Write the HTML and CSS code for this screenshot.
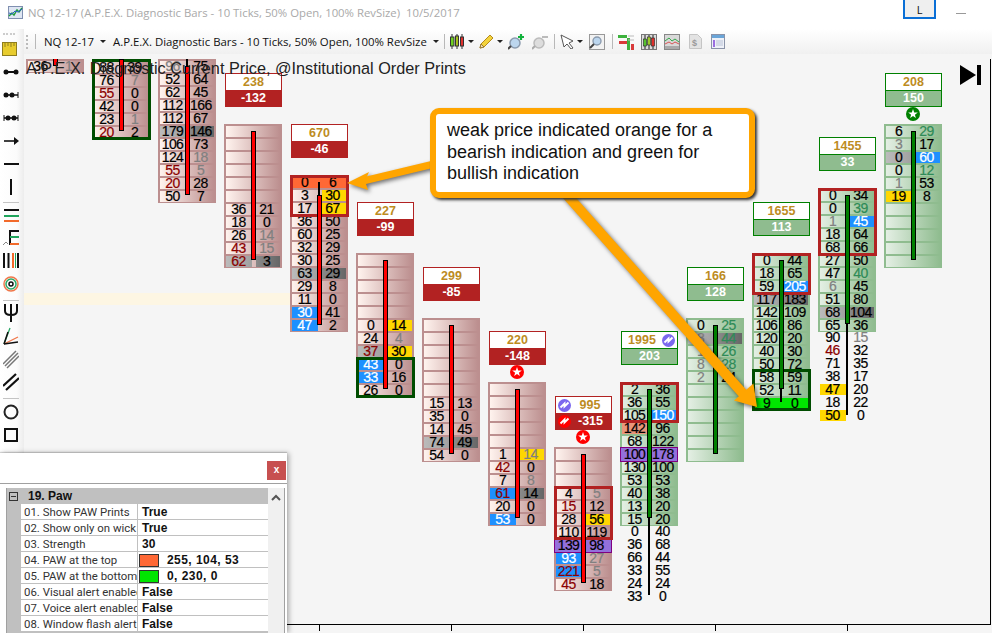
FILE: index.html
```html
<!DOCTYPE html>
<html lang="en">
<head>
<meta charset="utf-8">
<title>NQ 12-17 A.P.E.X. Diagnostic Bars</title>
<link rel="stylesheet" href="styles.css">
</head>
<body>
<div class="app">
  <header class="titlebar">
    <svg class="appicon" width="15" height="13" viewBox="0 0 15 13"><rect x=".5" y=".5" width="14" height="12" fill="#dfe6f3" stroke="#7f8fb0"/><path d="M1 10l3-3 2 2 3-5 2 2 3-4" fill="none" stroke="#1e9a3c" stroke-width="1.4"/><path d="M1 7l3 1 3-3 3 1 4-3" fill="none" stroke="#2b62c4"/></svg>
    <span class="wintitle">NQ 12-17 (A.P.E.X. Diagnostic Bars - 10 Ticks, 50% Open, 100% RevSize)&nbsp; 10/5/2017</span>
    <span class="lbtn">L</span>
    <span class="minimize"></span>
  </header>
  <div class="workspace">
    <aside class="sidebar">
      <span class="grip-h"></span>
      <svg class="ruler" width="15" height="14" viewBox="0 0 15 14"><rect x=".5" y=".5" width="14" height="13" fill="#e8cc2e" stroke="#8f7e1e"/><path d="M3 1v4M6 1v3M9 1v4M12 1v3" stroke="#8f7e1e"/></svg>
      <div class="tools">
        <svg class="tool" width="16" height="23" viewBox="0 0 16 23"><path d="M1 12h14" stroke="#111" stroke-width="2"/><circle cx="3" cy="12" r="2.5" fill="#111"/><circle cx="13" cy="12" r="2.5" fill="#111"/></svg>
        <svg class="tool" width="16" height="23" viewBox="0 0 16 23"><path d="M1 12h14" stroke="#111" stroke-width="1.5"/><circle cx="3" cy="12" r="2.5" fill="#111"/><circle cx="9" cy="12" r="2.5" fill="#111"/><path d="M15 9v6" stroke="#111"/></svg>
        <svg class="tool" width="16" height="23" viewBox="0 0 16 23"><path d="M1 12h14" stroke="#111" stroke-width="1.5"/><circle cx="5" cy="12" r="2.5" fill="#111"/><circle cx="11" cy="12" r="2.5" fill="#111"/><path d="M1 9v6M15 9v6" stroke="#111"/></svg>
        <svg class="tool" width="16" height="23" viewBox="0 0 16 23"><path d="M1 12h13" stroke="#111" stroke-width="1.6"/><path d="M11 8l5 4-5 4z" fill="#111"/></svg>
        <svg class="tool" width="16" height="23" viewBox="0 0 16 23"><path d="M1 12h15" stroke="#111" stroke-width="2"/></svg>
        <svg class="tool" width="16" height="23" viewBox="0 0 16 23"><path d="M8 4v16" stroke="#111" stroke-width="2"/></svg>
        <span class="toolsep gap-a"></span>
        <svg class="tool" width="16" height="23" viewBox="0 0 16 23"><path d="M1 7h15" stroke="#111" stroke-width="2"/><path d="M1 13h15" stroke="#1fa55c" stroke-width="2"/><path d="M1 18h15" stroke="#f26a2a" stroke-width="2"/></svg>
        <svg class="tool" width="16" height="23" viewBox="0 0 16 23"><path d="M7 4v15" stroke="#111" stroke-width="2"/><path d="M7 5h9" stroke="#111" stroke-width="2"/><path d="M7 11h9" stroke="#1fa55c" stroke-width="2"/><path d="M7 18h9" stroke="#f26a2a" stroke-width="2"/><path d="M0 19l3-3 2 2" fill="none" stroke="#888"/></svg>
        <svg class="tool" width="16" height="23" viewBox="0 0 16 23"><path d="M1 4v15M5.500 4v15" stroke="#111" stroke-width="2"/><path d="M10 4v15" stroke="#f26a2a" stroke-width="2"/><path d="M12.500 4v15" stroke="#1fa55c" stroke-width="1"/><path d="M15 4v15" stroke="#111" stroke-width="2"/></svg>
        <svg class="tool gap-c" width="16" height="23" viewBox="0 0 16 23"><circle cx="8" cy="11" r="7" fill="none" stroke="#f0774a" stroke-width="1.500"/><circle cx="8" cy="11" r="5" fill="none" stroke="#2aa866" stroke-width="1.500"/><circle cx="8" cy="11" r="2" fill="none" stroke="#111" stroke-width="1.500"/></svg>
        <span class="toolsep gap-d"></span>
        <svg class="tool" width="16" height="23" viewBox="0 0 16 23"><path d="M2 3v7q0 4 6 4 6 0 6-4V3M8 3v18" fill="none" stroke="#111" stroke-width="2"/></svg>
        <svg class="tool" width="16" height="23" viewBox="0 0 16 23"><path d="M1 20L7 4" stroke="#2aa866" stroke-width="1.300"/><path d="M1 20L15 13" stroke="#f0774a" stroke-width="1.300"/><path d="M1 20L15 18" stroke="#111" stroke-width="1.500"/><path d="M1 20L5 8" stroke="#111" stroke-width="1.500"/></svg>
        <svg class="tool" width="16" height="23" viewBox="0 0 16 23"><path d="M0 17L13 4M2 19L15 6M4 21L16 9" stroke="#777" stroke-width="1.500"/></svg>
        <svg class="tool" width="16" height="23" viewBox="0 0 16 23"><path d="M0 16L13 4M3 20L16 8" stroke="#111" stroke-width="2.200"/></svg>
        <span class="toolsep gap-e"></span>
        <svg class="tool" width="16" height="23" viewBox="0 0 16 23"><circle cx="8" cy="11" r="6.500" fill="none" stroke="#222" stroke-width="2"/></svg>
        <svg class="tool" width="16" height="23" viewBox="0 0 16 23"><rect x="2" y="5" width="12" height="12" fill="none" stroke="#111" stroke-width="2"/></svg>
      </div>
    </aside>
    <div class="mainpane">
      <nav class="toolbar">
        <span class="grip"></span>
        <span class="tsep first"></span>
        <span class="tlabel instr">NQ 12-17<i class="caret"></i></span>
        <span class="tlabel strat">A.P.E.X. Diagnostic Bars - 10 Ticks, 50% Open, 100% RevSize<i class="caret"></i></span>
        <span class="tsep s1"></span>
        <svg class="ti candle" width="14" height="15" viewBox="0 0 14 15"><path d="M2 0v15M7 0v15M12 0v15" stroke="#333"/><rect x=".5" y="3" width="3.5" height="9" fill="#6fd023" stroke="#333"/><rect x="5.5" y="2" width="3" height="10" fill="#a5c21f" stroke="#333"/><rect x="10.5" y="3" width="3" height="9" fill="#e2312d" stroke="#333"/></svg>
        <i class="caret c1t"></i>
        <svg class="ti pencil" width="15" height="15" viewBox="0 0 15 15"><path d="M1 14l1-4L11 1l3 3-9 9z" fill="#f3d33c" stroke="#b58a1b"/><path d="M1 14l1-4 3 3z" fill="#f4e3c0" stroke="#9a7b33"/></svg>
        <i class="caret c2t"></i>
        <svg class="ti zoomin" width="17" height="16" viewBox="0 0 17 16"><circle cx="7" cy="9" r="5" fill="#bcd6ee" stroke="#8b9bae" stroke-width="1.5"/><path d="M3 12l-3 3" stroke="#444" stroke-width="2"/><path d="M13 0v6M10 3h6" stroke="#12b23c" stroke-width="2.2"/></svg>
        <svg class="ti zoomout" width="16" height="16" viewBox="0 0 16 16"><circle cx="7" cy="9" r="5" fill="#ddd" stroke="#bbb" stroke-width="1.5"/><path d="M3 12l-3 3" stroke="#aaa" stroke-width="2"/><path d="M10 3h6" stroke="#bbb" stroke-width="2"/></svg>
        <span class="tsep s2"></span>
        <svg class="ti cursor" width="15" height="15" viewBox="0 0 15 15"><path d="M1 1l12 6-4 2 4 5-2 1-4-5-3 3z" fill="#fff" stroke="#555"/></svg>
        <i class="caret c3t"></i>
        <svg class="ti zoombox" width="16" height="16" viewBox="0 0 16 16"><rect x=".5" y=".5" width="15" height="15" fill="#f2f2f2" stroke="#999"/><circle cx="8" cy="7" r="4" fill="#bcd6ee" stroke="#8b9bae" stroke-width="1.4"/><path d="M5 10l-4 4" stroke="#444" stroke-width="2"/></svg>
        <span class="tsep s3"></span>
        <svg class="ti barsicon" width="16" height="16" viewBox="0 0 16 16"><rect x="0" y="1" width="9" height="3" fill="#3db23d"/><rect x="1" y="7" width="8" height="3" fill="#d83a3a"/><rect x="9" y="4" width="3" height="12" fill="#3db23d"/><rect x="13" y="10" width="3" height="6" fill="#d83a3a"/><path d="M10 2h6M10 6h6" stroke="#bbb"/></svg>
        <svg class="ti boxicon" width="16" height="16" viewBox="0 0 16 16"><rect x=".5" y=".5" width="15" height="15" fill="#ddd" stroke="#777"/><path d="M4 1v14M8 1v14M12 1v14" stroke="#222"/><rect x="2.5" y="5" width="3" height="7" fill="#55c22e" stroke="#222" stroke-width=".6"/><rect x="6.5" y="3" width="3" height="8" fill="#9ecb2c" stroke="#222" stroke-width=".6"/><rect x="10.5" y="4" width="3" height="8" fill="#df2f2b" stroke="#222" stroke-width=".6"/></svg>
        <svg class="ti lineicon" width="16" height="16" viewBox="0 0 16 16"><rect x=".5" y=".5" width="15" height="15" fill="#d9d9d9" stroke="#888"/><path d="M1 7l4-3 3 3 3-2 4 3" fill="none" stroke="#33a84a"/><path d="M1 10l4-2 3 2 3-2 4 2" fill="none" stroke="#d85555"/><rect x="1" y="12" width="14" height="3" fill="#aaa"/></svg>
        <svg class="ti docicon" width="13" height="15" viewBox="0 0 13 15"><path d="M.5.5h8l4 4v10H.5z" fill="#e3e3e3" stroke="#c5c5c5"/><text x="3" y="12" class="dollar">$</text></svg>
        <svg class="ti sheeticon" width="14" height="15" viewBox="0 0 14 15"><rect x=".5" y=".5" width="13" height="14" fill="#eef1f8" stroke="#8a93a8"/><rect x="1" y="1" width="12" height="3" fill="#6aa5d8"/><rect x="2" y="6" width="2" height="7" fill="#9a6ee0"/><path d="M5 7h7M5 9h7M5 11h7" stroke="#b9c2d6"/></svg>
      </nav>
      <main class="chart">
        <div class="plot">
          <div class="band"></div>

          <section class="col c1">
            <div class="bar red">
              <div class="row"></div>
              <div class="row"><span>36</span><span class="g">1</span></div>
              <i class="body rb ba"></i>
            </div>
          </section>

          <section class="col c2">
            <div class="bar red">
              <div class="row"><span>88</span><span>39</span></div>
              <div class="row"><span>76</span><span class="g">7</span></div>
              <div class="row"><span class="r">55</span><span>0</span></div>
              <div class="row"><span>42</span><span>0</span></div>
              <div class="row"><span>23</span><span class="g">1</span></div>
              <div class="row"><span class="r">20</span><span>2</span></div>
              <i class="frame dg fb"></i>
              <i class="body rb bb"></i>
            </div>
          </section>

          <section class="col c3">
            <div class="bar red">
              <div class="row"><span class="g">96</span><span>75</span></div>
              <div class="row"><span>52</span><span>64</span></div>
              <div class="row"><span>62</span><span>45</span></div>
              <div class="row"><span>112</span><span>166</span></div>
              <div class="row"><span>112</span><span>67</span></div>
              <div class="row"><span class="gl">179</span><span class="gr">146</span></div>
              <div class="row"><span>106</span><span>73</span></div>
              <div class="row"><span>124</span><span class="g">18</span></div>
              <div class="row"><span class="r">55</span><span class="g">5</span></div>
              <div class="row"><span class="r">20</span><span>28</span></div>
              <div class="row"><span>50</span><span>7</span></div>
              <i class="wick wt"></i>
              <i class="body rb"></i>
            </div>
          </section>

          <section class="col c4">
            <div class="hdr hr"><div class="hv">238</div><div class="hd">-132</div></div>
            <div class="bar red">
              <div class="row"></div><div class="row"></div><div class="row"></div><div class="row"></div><div class="row"></div><div class="row"></div>
              <div class="row"><span>36</span><span>21</span></div>
              <div class="row"><span>18</span><span>0</span></div>
              <div class="row"><span>26</span><span class="g">14</span></div>
              <div class="row"><span class="r">43</span><span class="g">15</span></div>
              <div class="row"><span class="gl r">62</span><span class="gr">3</span></div>
              <i class="body rb"></i>
            </div>
          </section>

          <section class="col c5">
            <div class="hdr hr"><div class="hv">670</div><div class="hd">-46</div></div>
            <div class="bar red">
              <div class="row hot"><span>0</span><span>6</span></div>
              <div class="row"><span>3</span><span class="go">30</span></div>
              <div class="row"><span>17</span><span class="go">67</span></div>
              <div class="row"><span>36</span><span>50</span></div>
              <div class="row"><span>60</span><span>25</span></div>
              <div class="row"><span>32</span><span>29</span></div>
              <div class="row"><span>30</span><span>25</span></div>
              <div class="row"><span class="gl">63</span><span class="gr">29</span></div>
              <div class="row"><span>29</span><span>8</span></div>
              <div class="row"><span>11</span><span>0</span></div>
              <div class="row"><span class="bl">30</span><span>41</span></div>
              <div class="row"><span class="bl">47</span><span>2</span></div>
              <i class="frame fr f3"></i>
              <i class="wick wt2"></i>
              <i class="body rb be"></i>
            </div>
          </section>

          <section class="col c6">
            <div class="hdr hr"><div class="hv">227</div><div class="hd">-99</div></div>
            <div class="bar red">
              <div class="row"></div><div class="row"></div><div class="row"></div><div class="row"></div><div class="row"></div>
              <div class="row"><span>0</span><span class="go">14</span></div>
              <div class="row"><span>24</span><span class="g">4</span></div>
              <div class="row"><span class="gl r">37</span><span class="go">30</span></div>
              <div class="row"><span class="bl">43</span><span>0</span></div>
              <div class="row"><span class="bl">33</span><span>16</span></div>
              <div class="row"><span>26</span><span>0</span></div>
              <i class="frame dg t104 f3s"></i>
              <i class="body rb"></i>
            </div>
          </section>

          <section class="col c7">
            <div class="hdr hr"><div class="hv">299</div><div class="hd">-85</div></div>
            <div class="bar red">
              <div class="row"></div><div class="row"></div><div class="row"></div><div class="row"></div><div class="row"></div><div class="row"></div>
              <div class="row"><span>15</span><span>13</span></div>
              <div class="row"><span>35</span><span>0</span></div>
              <div class="row"><span>14</span><span>45</span></div>
              <div class="row"><span class="gl">74</span><span class="gr">49</span></div>
              <div class="row"><span>54</span><span>0</span></div>
              <i class="body rb"></i>
            </div>
          </section>

          <section class="col c8">
            <div class="hdr hr"><div class="hv">220</div><div class="hd">-148</div></div>
            <svg class="star" width="14" height="14" viewBox="0 0 14 14"><circle cx="7" cy="7" r="7" fill="#f00"/><path class="starpath" d="M7 2l1.200 3.400 3.600.1-2.900 2.200 1 3.300L7 9l-2.900 2 1-3.300-2.900-2.200 3.600-.1z"/></svg>
            <div class="bar red">
              <div class="row"></div><div class="row"></div><div class="row"></div><div class="row"></div><div class="row"></div>
              <div class="row"><span>1</span><span class="go g">14</span></div>
              <div class="row"><span class="r">42</span><span>0</span></div>
              <div class="row"><span>7</span><span class="g">8</span></div>
              <div class="row"><span class="bl r">61</span><span class="gr">14</span></div>
              <div class="row"><span>20</span><span>0</span></div>
              <div class="row"><span class="bl">53</span><span>0</span></div>
              <i class="body rb"></i>
            </div>
          </section>

          <section class="col c9">
            <div class="hdr hr">
              <div class="hv hvi left"><svg class="bolt" width="13" height="13" viewBox="0 0 13 13"><circle cx="6.500" cy="6.500" r="6.500" fill="#7b68ee"/><path class="boltpath" d="M2.500 8.500l4-4v3l4-4"/></svg><b>995</b></div>
              <div class="hd hvi left"><svg class="bolt" width="13" height="13" viewBox="0 0 13 13"><circle cx="6.500" cy="6.500" r="6.500" fill="#f00"/><path class="boltpath" d="M2.500 8.500l4-4v3l4-4"/></svg><b>-315</b></div>
            </div>
            <svg class="star" width="14" height="14" viewBox="0 0 14 14"><circle cx="7" cy="7" r="7" fill="#f00"/><path class="starpath" d="M7 2l1.200 3.400 3.600.1-2.900 2.200 1 3.300L7 9l-2.900 2 1-3.300-2.900-2.200 3.600-.1z"/></svg>
            <div class="bar red">
              <div class="row"></div><div class="row"></div><div class="row"></div>
              <div class="row"><span>4</span><span class="g">5</span></div>
              <div class="row"><span class="r">15</span><span>12</span></div>
              <div class="row"><span>28</span><span class="go">56</span></div>
              <div class="row"><span>110</span><span>119</span></div>
              <div class="row pur"><span>139</span><span>98</span></div>
              <div class="row"><span class="bl">93</span><span class="g">27</span></div>
              <div class="row"><span class="bl r">221</span><span class="g">5</span></div>
              <div class="row"><span class="r">45</span><span>18</span></div>
              <i class="frame fr t39 f4"></i>
              <i class="body rb"></i>
            </div>
          </section>

          <section class="col c10">
            <div class="hdr hg">
              <div class="hv hvi right"><b>1995</b><svg class="bolt" width="13" height="13" viewBox="0 0 13 13"><circle cx="6.500" cy="6.500" r="6.500" fill="#7b68ee"/><path class="boltpath" d="M2.500 8.500l4-4v3l4-4"/></svg></div>
              <div class="hd">203</div>
            </div>
            <div class="bar grn">
              <div class="row"><span>2</span><span>36</span></div>
              <div class="row"><span>36</span><span>55</span></div>
              <div class="row"><span>105</span><span class="bl">150</span></div>
              <div class="row"><span class="sa">142</span><span>96</span></div>
              <div class="row"><span>68</span><span>122</span></div>
              <div class="row pur"><span>100</span><span>178</span></div>
              <div class="row"><span>130</span><span>100</span></div>
              <div class="row"><span>53</span><span>53</span></div>
              <div class="row"><span>40</span><span>38</span></div>
              <div class="row"><span>13</span><span>20</span></div>
              <div class="row"><span>15</span><span>20</span></div>
              <i class="frame fr f3s"></i>
              <i class="wick wj"></i>
              <i class="body gb"></i>
            </div>
            <div class="plain">
              <div class="row"><span>0</span><span>40</span></div>
              <div class="row"><span>36</span><span>68</span></div>
              <div class="row"><span>66</span><span>44</span></div>
              <div class="row"><span>33</span><span>55</span></div>
              <div class="row"><span>24</span><span>24</span></div>
              <div class="row"><span>33</span><span>0</span></div>
            </div>
          </section>

          <section class="col c11">
            <div class="hdr hg"><div class="hv">166</div><div class="hd">128</div></div>
            <div class="bar grn">
              <div class="row"><span>0</span><span class="sg">25</span></div>
              <div class="row"><span class="gl g">8</span><span class="gr sg">44</span></div>
              <div class="row"><span class="g">1</span><span class="sg">26</span></div>
              <div class="row"><span class="g">8</span><span class="sg">28</span></div>
              <div class="row"><span class="g">2</span><span>24</span></div>
              <div class="row"></div><div class="row"></div><div class="row"></div><div class="row"></div><div class="row"></div><div class="row"></div>
              <i class="body gb"></i>
            </div>
          </section>

          <section class="col c12">
            <div class="hdr hg"><div class="hv">1655</div><div class="hd">113</div></div>
            <div class="bar grn">
              <div class="row"><span>0</span><span>44</span></div>
              <div class="row"><span>18</span><span>65</span></div>
              <div class="row"><span>59</span><span class="bl">205</span></div>
              <div class="row"><span class="gl">117</span><span class="gr">183</span></div>
              <div class="row"><span>142</span><span>109</span></div>
              <div class="row"><span>106</span><span>86</span></div>
              <div class="row"><span>120</span><span>20</span></div>
              <div class="row"><span>40</span><span>30</span></div>
              <div class="row"><span>50</span><span>72</span></div>
              <div class="row"><span>58</span><span>59</span></div>
              <div class="row"><span>52</span><span>11</span></div>
              <div class="row lime"><span>9</span><span>0</span></div>
              <i class="frame fr f3"></i>
              <i class="frame dg t116 f3"></i>
              <i class="wick wl"></i>
              <i class="body gb"></i>
            </div>
          </section>

          <section class="col c13">
            <div class="hdr hg"><div class="hv">1455</div><div class="hd">33</div></div>
            <div class="bar grn">
              <div class="row"><span>0</span><span>34</span></div>
              <div class="row"><span>0</span><span class="sg">39</span></div>
              <div class="row"><span class="g">1</span><span class="bl">45</span></div>
              <div class="row"><span>18</span><span>64</span></div>
              <div class="row"><span>68</span><span>66</span></div>
              <div class="row"><span>27</span><span>50</span></div>
              <div class="row"><span>47</span><span class="sg">40</span></div>
              <div class="row"><span class="g">6</span><span>45</span></div>
              <div class="row"><span>51</span><span>80</span></div>
              <div class="row"><span class="gl">68</span><span class="gr">104</span></div>
              <div class="row"><span>65</span><span>36</span></div>
              <i class="frame fr f5"></i>
              <i class="wick wm"></i>
              <i class="body gb"></i>
            </div>
            <div class="plain">
              <div class="row"><span>90</span><span class="g">15</span></div>
              <div class="row"><span class="r">46</span><span>32</span></div>
              <div class="row"><span>71</span><span>35</span></div>
              <div class="row"><span>38</span><span>17</span></div>
              <div class="row"><span class="go">47</span><span>20</span></div>
              <div class="row"><span>18</span><span>22</span></div>
              <div class="row"><span class="go">50</span><span>0</span></div>
            </div>
          </section>

          <section class="col c14">
            <div class="hdr hg"><div class="hv">208</div><div class="hd">150</div></div>
            <svg class="star" width="14" height="14" viewBox="0 0 14 14"><circle cx="7" cy="7" r="7" fill="#008000"/><path class="starpath" d="M7 2l1.200 3.400 3.600.1-2.900 2.200 1 3.300L7 9l-2.900 2 1-3.300-2.900-2.200 3.600-.1z"/></svg>
            <div class="bar grn">
              <div class="row"><span>6</span><span class="sg">29</span></div>
              <div class="row"><span class="g">3</span><span>17</span></div>
              <div class="row"><span class="gl">0</span><span class="bl">60</span></div>
              <div class="row"><span>0</span><span class="sg">12</span></div>
              <div class="row"><span class="g">1</span><span>53</span></div>
              <div class="row"><span class="go">19</span><span>8</span></div>
              <div class="row"></div><div class="row"></div><div class="row"></div><div class="row"></div><div class="row"></div>
              <i class="body gb"></i>
            </div>
          </section>

          <p class="charttitle">A.P.E.X. Diagnostic Current Price, @Institutional Order Prints</p>
          <svg class="endicon" width="21" height="20" viewBox="0 0 21 20"><path d="M0 0l16 10L0 20z" fill="#000"/><rect x="17" y="0" width="4" height="20" fill="#000"/></svg>

          <svg class="arrows" width="966" height="565" viewBox="0 0 966 565">
            <path d="M410 105L339 122" stroke="#ffa500" stroke-width="7" fill="none"/>
            <path d="M323 124L345 113L341 122L344 131z" fill="#ffa500"/>
            <path d="M542 135L722 338" stroke="#ffa500" stroke-width="10" fill="none"/>
            <path d="M733 348L729.400 324.400L710 341.600z" fill="#ffa500"/>
          </svg>
          <div class="callout">weak price indicated orange for a bearish indication and green for bullish indication</div>
        </div>
        <div class="axis"><i></i><i></i><i></i><i></i><i></i></div>
      </main>
    </div>
  </div>

  <aside class="panel">
    <div class="panelhead"><span class="close">x</span></div>
    <div class="gridwrap">
      <div class="grid">
        <div class="grouprow"><span class="minus"></span><b>19. Paw</b></div>
        <div class="prop"><span class="name">01. Show PAW Prints</span><span class="val">True</span></div>
        <div class="prop"><span class="name">02. Show only on wick</span><span class="val">True</span></div>
        <div class="prop"><span class="name">03. Strength</span><span class="val">30</span></div>
        <div class="prop"><span class="name">04. PAW at the top</span><span class="val num"><i class="swatch sw-o"></i>255, 104, 53</span></div>
        <div class="prop"><span class="name">05. PAW at the bottom</span><span class="val num"><i class="swatch sw-g"></i>0, 230, 0</span></div>
        <div class="prop"><span class="name">06. Visual alert enabled</span><span class="val">False</span></div>
        <div class="prop"><span class="name">07. Voice alert enabled</span><span class="val">False</span></div>
        <div class="prop"><span class="name">08. Window flash alert</span><span class="val">False</span></div>
      </div>
      <div class="scroll"><svg width="10" height="7" viewBox="0 0 10 7"><path d="M1 6l4-4 4 4" fill="none" stroke="#555" stroke-width="2"/></svg></div>
    </div>
  </aside>
</div>
</body>
</html>
```
FILE: styles.css
```css
* { box-sizing: border-box; }
html, body { margin: 0; padding: 0; }
body { width: 992px; height: 633px; overflow: hidden; background: #fff; font-family: "Liberation Sans", Arial, sans-serif; }
i { display: block; font-style: normal; }

.app { position: relative; width: 992px; height: 633px; display: flex; flex-direction: column; overflow: hidden; }

/* window title */
.titlebar { height: 29px; flex: none; display: flex; align-items: flex-start; background: #fff; padding: 6px 0 0 8px; position: relative; }
.appicon { flex: none; }
.wintitle { margin-left: 5px; margin-top: -1px; font: 11.35px/15px "Open Sans", sans-serif; color: #a9a9a9; white-space: nowrap; flex: 1; }
.lbtn { position: absolute; left: 903px; top: -3px; width: 33px; height: 22px; border: 2px solid #0a6fd6; background: #efefef; font: 11px/20px "Open Sans", sans-serif; text-align: center; color: #111; padding-top: 1px; }
.minimize { position: absolute; left: 956px; top: 13px; width: 10px; height: 1px; background: #999; }

/* main area */
.workspace { flex: 1; display: flex; min-height: 0; }
.sidebar { width: 24px; flex: none; background: linear-gradient(90deg, #fff 0, #fbfbfb 70%, #ececec 100%); display: flex; flex-direction: column; padding: 4px 0 0 2px; }
.grip-h { width: 12px; height: 2px; border-top: 2px dotted #ccc; margin-left: 1px; flex: none; }
.ruler { margin-top: 7px; flex: none; }
.tools { margin-top: 4px; display: flex; flex-direction: column; margin-left: 1px; }
.tool { flex: none; display: block; }
.toolsep { display: block; width: 16px; height: 1px; background: #c4c4c4; flex: none; }
.gap-a { margin: 4px 0 0; }
.gap-c { margin-top: 1px; }
.gap-d { margin: 4px 0 0; }
.gap-e { margin: 5px 0 2px; }

.mainpane { flex: 1; min-width: 0; display: flex; flex-direction: column; }

/* top toolbar */
.toolbar { height: 25px; flex: none; display: flex; align-items: center; padding-left: 2px; background: linear-gradient(#fff, #f0f0f0); }
.grip { width: 2px; height: 14px; border-left: 2px dotted #bbb; flex: none; }
.tsep { width: 1px; height: 15px; background: #b8b8b8; flex: none; }
.tsep.first { margin-left: 7px; }
.tlabel { font: 11.4px/16px "Open Sans", sans-serif; color: #111; white-space: nowrap; display: flex; align-items: center; flex: none; }
.instr { margin-left: 8px; width: 69px; }
.strat { width: 331px; }
.caret { width: 0; height: 0; border: 3px solid transparent; border-top: 3px solid #222; border-bottom-width: 0; margin-left: 6px; flex: none; }
.ti { flex: none; }
.candle { margin-left: 5px; }
.c1t { margin-left: 4px; }
.pencil { margin-left: 5px; }
.c2t { margin-left: 3px; }
.zoomin { margin-left: 5px; }
.zoomout { margin-left: 7px; }
.s2 { margin-left: 6px; }
.cursor { margin-left: 5px; }
.c3t { margin-left: 2px; }
.zoombox { margin-left: 6px; }
.s3 { margin-left: 7px; }
.barsicon { margin-left: 5px; }
.boxicon { margin-left: 7px; }
.lineicon { margin-left: 7px; }
.docicon { margin-left: 9px; }
.sheeticon { margin-left: 9px; }
.dollar { font: bold 9px "Liberation Sans", sans-serif; fill: #999; }

.chart { flex: 1; min-height: 0; background: #f5f5f5; padding-top: 5px; }
.plot { position: relative; width: 967px; height: 566px; overflow: hidden; border-right: 1px solid #000; border-bottom: 1px solid #000; }
.band { position: absolute; left: 0; top: 234px; width: 270px; height: 12px; background: #fdf6e3; }

.col { position: absolute; width: 59px; }
.c1 { left: 2px; top: -13px; }
.c2 { left: 68px; top: 1px; }
.c3 { left: 134px; top: 0; }
.c4 { left: 200px; top: 14px; }
.c5 { left: 266px; top: 65px; }
.c6 { left: 332px; top: 143px; }
.c7 { left: 398px; top: 208px; }
.c8 { left: 464px; top: 272px; }
.c9 { left: 530px; top: 337px; }
.c10 { left: 596px; top: 272px; }
.c11 { left: 662px; top: 208px; }
.c12 { left: 728px; top: 143px; }
.c13 { left: 794px; top: 78px; }
.c14 { left: 860px; top: 14px; }

/* stats box */
.hdr { width: 57px; height: 34px; margin: 0 0 17px 1px; font: bold 12.5px/16px "Liberation Sans", sans-serif; text-align: center; }
.hv { height: 17px; background: #fff; color: #bd8c1f; border: 1px solid; border-bottom: 0; line-height: 16px; }
.hd { height: 17px; color: #fff; line-height: 17px; }
.hr .hv { border-color: #b22222; }
.hr .hd { background: #b22222; }
.hg .hv { border-color: #008000; }
.hg .hd { background: #8fbc8f; border: 1px solid #008000; line-height: 15px; }
.hvi { display: flex; align-items: center; }
.hvi b { flex: 1; }
.hvi.left { padding-left: 2px; }
.hvi.right { padding-right: 2px; }
.hd.hvi.left { padding-left: 3px; }
.hvi.left b { padding-right: 2px; }

.star { position: absolute; left: 22px; top: 34px; }
.starpath { fill: #fff; }
.boltpath { fill: none; stroke: #fff; stroke-width: 1.9; }

/* footprint bar */
.bar { position: relative; width: 58px; display: flex; flex-direction: column; gap: 2px; padding: 2px 2px 1px; }
.red { background: #bc8f8f; }
.grn { background: #8fbc8f; }
.row { height: 11px; display: grid; grid-template-columns: 26px 24px; column-gap: 4px; font: 14px/11px "Liberation Sans", sans-serif; letter-spacing: -.55px; color: #000; -webkit-text-stroke: .2px currentColor; text-align: center; position: relative; white-space: nowrap; }
.red .row { background: linear-gradient(90deg, #fff3ee, #bc8f8f); }
.grn .row { background: linear-gradient(90deg, #e4efe4, #8fbc8f); }
.row span:first-child { padding-right: 1px; }
.row span:last-child { padding-right: 3px; }
.row.pur { background: #9370db; box-shadow: 0 0 0 1px #9370db, 0 0 0 2px #800080; }
.row.hot { background: #ff6835; }
.row.lime { background: #00e600; }
.r { color: #8b0000; }
.g { color: #808080; }
.sg { color: #2e8b57; }
.bl { background: #1e90ff; color: #fff; }
.bl.r { color: #8b0000; }
.go { background: #ffd700; }
.sa { background: #e9967a; }
.gl { background: linear-gradient(90deg, #bbb, #a0a0a0); }
.gr { background: linear-gradient(90deg, #8a8a8a, #666); }

.plain { display: flex; flex-direction: column; gap: 2px; padding-left: 2px; }
.plain .row { background: none; }

.body { position: absolute; left: 27px; top: 7px; width: 5px; height: 129px; border: 1px solid #000; }
.rb { background: #f00; }
.gb { background: #008000; }
.ba { top: 0; height: 20px; }
.bb { top: -1px; height: 72px; }
.be { top: 20px; height: 130px; }
.wick { position: absolute; left: 28px; width: 2px; background: #000; }
.wt { top: 0; height: 7px; }
.wt2 { top: 7px; height: 14px; }
.wj { top: 136px; height: 77px; }
.wm { top: 136px; height: 91px; }
.wl { top: 135px; height: 14px; }

.frame { position: absolute; left: 0; top: 0; width: 59px; border: 3px solid; }
.fr { border-color: #b22222; }
.dg { border-color: #004d00; }
.fb { top: -1px; height: 81px; }
.f3 { height: 42px; }
.f3s { height: 41px; }
.f4 { height: 54px; }
.f5 { height: 68px; }
.t39 { top: 39px; }
.t104 { top: 104px; }
.t116 { top: 116px; }

.charttitle { position: absolute; left: 2px; top: 0; margin: 0; font: 16.25px/19px "Liberation Sans", sans-serif; color: #222; white-space: nowrap; }
.endicon { position: absolute; left: 936px; top: 6px; }

.arrows { position: absolute; left: 0; top: 0; filter: drop-shadow(2px 2px 2px rgba(0,0,0,.55)); }
.callout { position: absolute; left: 406px; top: 49px; width: 325px; height: 90px; border: 6px solid #ffa500; border-radius: 9px; background: #fff; padding: 6px 10px 0 11px; font: 18px/21.500px "Liberation Sans", sans-serif; color: #111; box-shadow: 2px 2px 3px #333; }

.axis { display: flex; gap: 131px; padding-left: 295px; }
.axis i { width: 1px; height: 6px; background: #000; }

/* settings panel */
.panel { position: absolute; left: 0; top: 453px; width: 287px; height: 180px; background: #fff; box-shadow: 2px 0 5px rgba(0,0,0,.3), 0 -1px 1px rgba(0,0,0,.15); display: flex; flex-direction: column; }
.panelhead { height: 31px; flex: none; border-bottom: 1px solid #a0a0a0; position: relative; }
.close { position: absolute; left: 267px; top: 8px; width: 19px; height: 19px; background: #c75050; color: #fff; font: bold 10px/18px "Liberation Sans", sans-serif; text-align: center; }
.gridwrap { display: flex; padding: 4px 0 0 6px; }
.grid { width: 262px; border-left: 1px solid #a0a0a0; flex: none; background: #c0c0c0; }
.grouprow { height: 16px; display: flex; align-items: center; background: #c0c0c0; font: bold 12px/16px "Liberation Sans", sans-serif; color: #111; padding-left: 2px; }
.grouprow b { margin-left: 10px; }
.minus { width: 9px; height: 9px; border: 1px solid #333; background: linear-gradient(#333, #333) center/5px 1px no-repeat; }
.prop { height: 16px; margin-left: 14px; display: grid; grid-template-columns: 116px 1fr; grid-template-rows: 15px; column-gap: 1px; background: #c0c0c0; font: 11.4px/16px "Roboto", sans-serif; }
.name { background: #fff; color: #333; padding-left: 3px; overflow: hidden; white-space: nowrap; }
.val { background: #fff; font: bold 12px/15px "Liberation Sans", sans-serif; color: #111; padding: 1px 0 0 4px; display: flex; align-items: center; white-space: nowrap; }
.val.num { letter-spacing: .45px; }
.swatch { width: 20px; height: 13px; border: 1px solid #333; margin: 0 8px 0 -3px; flex: none; }
.sw-o { background: #ff6835; }
.sw-g { background: #00e600; }
.scroll { width: 17px; flex: none; background: #f0f0f0; border-right: 1px solid #a0a0a0; display: flex; justify-content: center; padding-top: 6px; height: 150px; }
.scroll svg { display: block; }
```
